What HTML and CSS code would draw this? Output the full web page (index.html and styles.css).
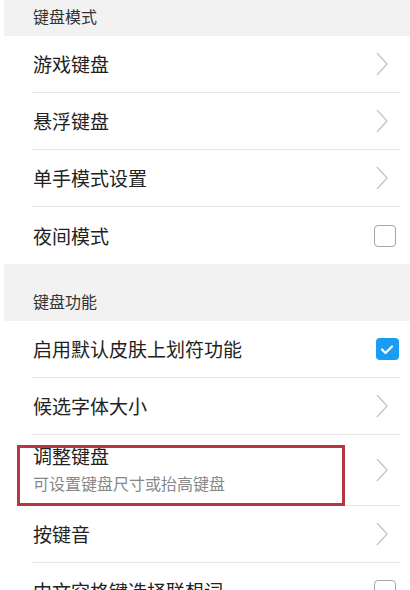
FILE: index.html
```html
<!DOCTYPE html>
<html lang="zh-CN">
<head>
    <meta charset="UTF-8">
    <meta name="viewport" content="width=device-width, initial-scale=1.0">
    <title>键盘设置</title>
    <link rel="stylesheet" href="styles.css">
</head>
<body>
    <div class="screen">
        <div class="group-title">键盘模式</div>
        <div class="item">
            <span class="label">游戏键盘</span>
            <svg class="arrow" viewBox="0 0 12 24"><path d="M1 1 L11 12 L1 23"/></svg>
        </div>
        <div class="item">
            <span class="label">悬浮键盘</span>
            <svg class="arrow" viewBox="0 0 12 24"><path d="M1 1 L11 12 L1 23"/></svg>
        </div>
        <div class="item">
            <span class="label">单手模式设置</span>
            <svg class="arrow" viewBox="0 0 12 24"><path d="M1 1 L11 12 L1 23"/></svg>
        </div>
        <div class="item last">
            <span class="label">夜间模式</span>
            <span class="check"></span>
        </div>

        <div class="group-title">键盘功能</div>
        <div class="item">
            <span class="label">启用默认皮肤上划符功能</span>
            <span class="check on">
                <svg viewBox="0 0 22 22"><path d="M6 11.5 L9.5 15 L16 8.5"/></svg>
            </span>
        </div>
        <div class="item">
            <span class="label">候选字体大小</span>
            <svg class="arrow" viewBox="0 0 12 24"><path d="M1 1 L11 12 L1 23"/></svg>
        </div>
        <div class="item tall">
            <div class="texts">
                <span class="label">调整键盘</span>
                <span class="sub">可设置键盘尺寸或抬高键盘</span>
            </div>
            <svg class="arrow" viewBox="0 0 12 24"><path d="M1 1 L11 12 L1 23"/></svg>
            <div class="mark"></div>
        </div>
        <div class="item">
            <span class="label">按键音</span>
            <svg class="arrow" viewBox="0 0 12 24"><path d="M1 1 L11 12 L1 23"/></svg>
        </div>
        <div class="item">
            <span class="label">中文空格键选择联想词</span>
            <span class="check"></span>
        </div>
    </div>
</body>
</html>
```

FILE: styles.css
```css
body {
    margin: 0;
    background-color: #fff;
    font-family: "Noto Sans CJK SC", "Noto Sans", sans-serif;
    overflow: hidden;
}
.screen {
    margin-left: 4px;
    margin-top: -21px; /* 滚动位置 */
}
.group-title {
    height: 57px;
    display: flex;
    align-items: flex-end;
    padding: 0 0 11px 29px;
    box-sizing: border-box;
    background-color: #f2f2f2;
    color: #333;
    font-size: 16px;
    line-height: 18px;
}
.item {
    position: relative;
    height: 57px;
    margin: 0 10px 0 28px;
    padding-left: 1px;
    display: flex;
    align-items: center;
    justify-content: space-between;
    border-bottom: 1px solid #e8e8e8;
    box-sizing: border-box;
}
.item.last {
    border-bottom: none;
}
.item.tall {
    height: 71px;
}
.label {
    font-size: 19px;
    color: #222;
    line-height: 22px;
}
.texts {
    display: flex;
    flex-direction: column;
    gap: 6px;
    padding-bottom: 2px;
}
.sub {
    font-size: 16px;
    color: #888;
    line-height: 20px;
}
.arrow {
    width: 12px;
    height: 24px;
    margin-right: 12px;
    fill: none;
    stroke: #c6c6c6;
    stroke-width: 1.4;
}
.check {
    width: 22px;
    height: 22px;
    margin-right: 4px;
    border: 1.5px solid #a6a6a6;
    border-radius: 4px;
    box-sizing: border-box;
}
.check.on {
    width: 23px;
    margin-right: 1px;
    border: none;
    background-color: #1a9cf2;
}
.check svg {
    display: block;
    width: 22px;
    height: 22px;
    fill: none;
    stroke: #fff;
    stroke-width: 2.2;
    stroke-linecap: round;
    stroke-linejoin: round;
}
.mark {
    position: absolute;
    left: -15px;
    top: 10px;
    width: 328px;
    height: 61px;
    border: 3px solid #b83640;
    box-sizing: border-box;
}
```
